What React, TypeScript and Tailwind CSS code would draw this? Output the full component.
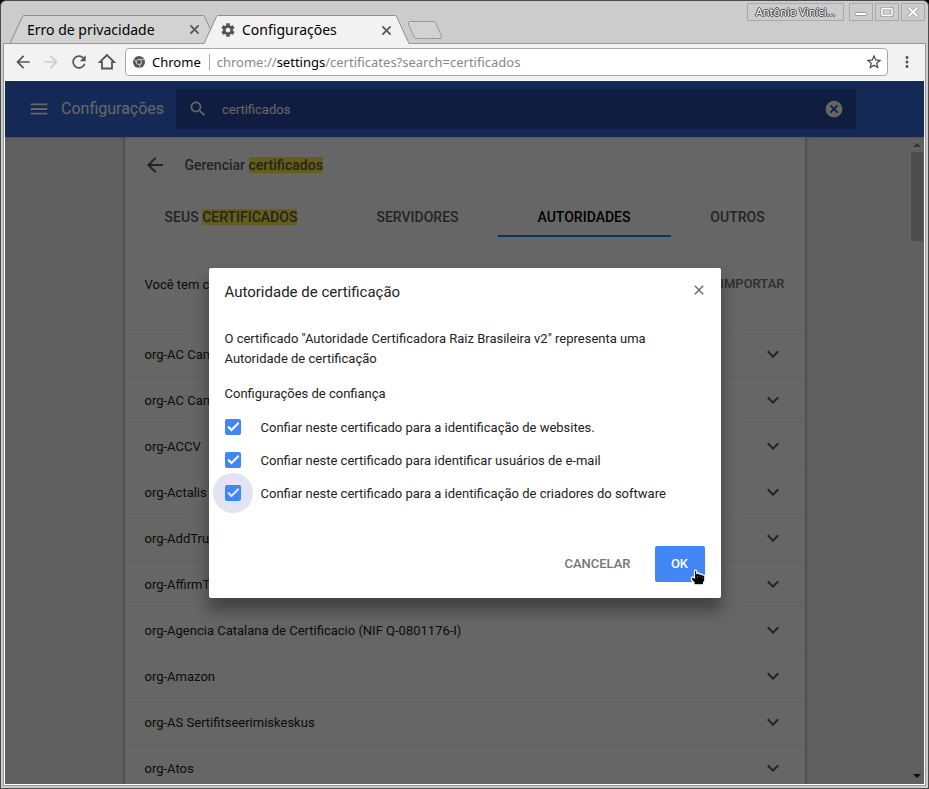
import { useId, useState, type ReactNode } from "react";

const authorities = [
  "org-AC Camerfirma",
  "org-AC Camerfirma",
  "org-ACCV",
  "org-Actalis",
  "org-AddTrust",
  "org-AffirmTrust",
  "org-Agencia Catalana de Certificacio (NIF Q-0801176-I)",
  "org-Amazon",
  "org-AS Sertifitseerimiskeskus",
  "org-Atos",
];

function Icon({ d, className }: { d: string; className: string }) {
  return (
    <svg viewBox="0 0 24 24" fill="currentColor" aria-hidden="true" className={className}>
      <path d={d} />
    </svg>
  );
}

const paths = {
  back: "M20 11H7.83l5.59-5.59L12 4l-8 8 8 8 1.41-1.41L7.83 13H20v-2z",
  forward: "M12 4l-1.41 1.41L16.17 11H4v2h12.17l-5.58 5.59L12 20l8-8z",
  reload:
    "M17.65 6.35C16.2 4.9 14.21 4 12 4c-4.42 0-7.99 3.58-7.99 8s3.57 8 7.99 8c3.73 0 6.84-2.55 7.73-6h-2.08c-.82 2.33-3.04 4-5.65 4-3.31 0-6-2.69-6-6s2.69-6 6-6c1.66 0 3.14.69 4.22 1.78L13 11h7V4l-2.35 2.35z",
  close:
    "M19 6.41L17.59 5 12 10.59 6.41 5 5 6.41 10.59 12 5 17.59 6.41 19 12 13.41 17.59 19 19 17.59 13.41 12z",
  menu: "M3 18h18v-2H3v2zm0-5h18v-2H3v2zm0-7v2h18V6H3z",
  search:
    "M15.5 14h-.79l-.28-.27C15.41 12.59 16 11.11 16 9.5 16 5.91 13.09 3 9.5 3S3 5.91 3 9.5 5.91 16 9.5 16c1.61 0 3.09-.59 4.23-1.57l.27.28v.79l5 4.99L20.49 19l-4.99-5zm-6 0C7.01 14 5 11.99 5 9.5S7.01 5 9.5 5 14 7.01 14 9.5 11.99 14 9.5 14z",
  cancel:
    "M12 2C6.47 2 2 6.47 2 12s4.47 10 10 10 10-4.47 10-10S17.53 2 12 2zm5 13.59L15.59 17 12 13.41 8.41 17 7 15.59 10.59 12 7 8.41 8.41 7 12 10.59 15.59 7 17 8.41 13.41 12 17 15.59z",
  gear: "M19.43 12.98c.04-.32.07-.64.07-.98s-.03-.66-.07-.98l2.11-1.65c.19-.15.24-.42.12-.64l-2-3.46c-.12-.22-.39-.3-.61-.22l-2.49 1c-.52-.4-1.08-.73-1.69-.98l-.38-2.65C14.46 2.18 14.25 2 14 2h-4c-.25 0-.46.18-.49.42l-.38 2.65c-.61.25-1.17.59-1.69.98l-2.49-1c-.23-.09-.49 0-.61.22l-2 3.46c-.13.22-.07.49.12.64l2.11 1.65c-.04.32-.07.65-.07.98s.03.66.07.98l-2.11 1.65c-.19.15-.24.42-.12.64l2 3.46c.12.22.39.3.61.22l2.49-1c.52.4 1.08.73 1.69.98l.38 2.65c.03.24.24.42.49.42h4c.25 0 .46-.18.49-.42l.38-2.65c.61-.25 1.17-.59 1.69-.98l2.49 1c.23.09.49 0 .61-.22l2-3.46c.12-.22.07-.49-.12-.64l-2.11-1.65zM12 15.5c-1.93 0-3.5-1.57-3.5-3.5s1.57-3.5 3.5-3.5 3.5 1.57 3.5 3.5-1.57 3.5-3.5 3.5z",
  star: "M22 9.24l-7.19-.62L12 2 9.19 8.63 2 9.24l5.46 4.73L5.82 21 12 17.27 18.18 21l-1.63-7.03L22 9.24zM12 15.4l-3.76 2.27 1-4.28-3.32-2.88 4.38-.38L12 6.1l1.71 4.04 4.38.38-3.32 2.88 1 4.28L12 15.4z",
  more: "M12 8c1.1 0 2-.9 2-2s-.9-2-2-2-2 .9-2 2 .9 2 2 2zm0 2c-1.1 0-2 .9-2 2s.9 2 2 2 2-.9 2-2-.9-2-2-2zm0 6c-1.1 0-2 .9-2 2s.9 2 2 2 2-.9 2-2-.9-2-2-2z",
  expand: "M16.59 8.59L12 13.17 7.41 8.59 6 10l6 6 6-6z",
};

function BrowserTab({ title, icon, active }: { title: string; icon?: ReactNode; active?: boolean }) {
  const fill = active ? "#f2f2f2" : "#d2d2d2";
  return (
    <div className="-mr-[13px] flex h-[29px]">
      <svg viewBox="0 0 14 29" className="h-[29px] w-[14px] shrink-0" aria-hidden="true">
        <path d={active ? "M0 29L13 .5H14V29z" : "M1 28L13 .5H14V28z"} fill={fill} />
        <path d="M0 28.5L12.5 1.5Q13 .5 14 .5" fill="none" stroke="#8e8e8e" />
      </svg>
      <div
        className={
          active
            ? "flex w-[177px] items-center border-t border-[#8e8e8e] bg-[#f2f2f2]"
            : "flex w-[179px] items-center border-t border-b border-t-[#8e8e8e] border-b-[#999] bg-[#d2d2d2]"
        }
      >
        {icon}
        <button className={active ? "ml-1.5 flex-1 text-left" : "ml-[3px] flex-1 text-left"}>{title}</button>
        <button aria-label="Fechar guia" className={active ? "mr-px" : "mr-px"}>
          <Icon d={paths.close} className="size-[15px] stroke-current stroke-1 text-[#555]" />
        </button>
      </div>
      <svg viewBox="0 0 14 29" className="h-[29px] w-[14px] shrink-0" aria-hidden="true">
        <path d={active ? "M14 29L1 .5H0V29z" : "M13 28L1 .5H0V28z"} fill={fill} />
        <path d="M14 28.5L1.5 1.5Q1 .5 0 .5" fill="none" stroke="#8e8e8e" />
      </svg>
    </div>
  );
}

function Trust({ label, focused }: { label: string; focused?: boolean }) {
  const id = useId();
  const [on, setOn] = useState(true);
  return (
    <div className="flex h-[33px] items-center gap-5">
      <span className="relative flex size-4">
        {focused && <span className="absolute -inset-3 rounded-full bg-[#e2e4f3]" />}
        <input
          id={id}
          type="checkbox"
          checked={on}
          onChange={() => setOn(!on)}
          className="peer relative size-4 appearance-none rounded-xs border-2 border-[#5a5a5a] checked:border-0 checked:bg-[#4285f4]"
        />
        <svg viewBox="0 0 16 16" aria-hidden="true" className="pointer-events-none absolute inset-0 hidden peer-checked:block">
          <path d="M3 7.500L6.500 11L13.700 3.800" fill="none" stroke={focused ? "#e2e8fa" : "#fff"} strokeWidth="2" />
        </svg>
      </span>
      <label htmlFor={id} className="pt-0.5">{label}</label>
    </div>
  );
}

function ChromeLogo() {
  return (
    <svg viewBox="0 0 12 12" className="size-3" aria-hidden="true">
      <circle cx="6" cy="6" r="6" fill="#555" />
      <circle cx="6" cy="6" r="2.6" fill="none" stroke="#ddd" strokeWidth=".8" />
      <path d="M6 3.400H11.400M3.700 7.200L1.200 2.800M8.300 7.200L5.800 12" stroke="#ddd" strokeWidth=".8" />
    </svg>
  );
}

function HandCursor() {
  return (
    <svg viewBox="0 0 16 17" className="absolute -right-px -bottom-1 h-[17px] w-4" aria-hidden="true">
      <path
        d="M4.500 2Q5.500 .2 6.800 2V4.500L8.500 4L9.500 5L11.500 4.800L12.500 6L14.800 6.500V12L13.500 13.500V15.800H4V13.500L1.500 11V8.500L3 8L4.500 9z"
        fill="#000"
        stroke="#fff"
        strokeWidth="1.2"
      />
      <path d="M7.500 7V9M10 7.500V9M12.500 8V9.500" stroke="#777" strokeWidth=".7" />
    </svg>
  );
}

export default function App() {
  const mark = "bg-[#ffeb3b] text-inherit";
  return (
    <div className="h-screen bg-black">
      <div className="flex h-full flex-col overflow-hidden rounded-t-md border border-[#4b4b4b] bg-[#cccccc] px-0.5 pb-0.5 font-['Noto_Sans',sans-serif] text-[14px] leading-5 text-black">
        <header className="relative z-10 -mb-px flex h-[43px] shrink-0 items-end">
          <div className="flex flex-1 items-end pl-[7px]">
            <BrowserTab title="Erro de privacidade" />
            <div className="z-10 flex">
              <BrowserTab title="Configurações" active icon={<Icon d={paths.gear} className="ml-0.5 size-4 text-[#555]" />} />
            </div>
            <button aria-label="Nova guia" className="mb-1 ml-[11px] pb-px">
              <svg viewBox="0 0 36 18" className="h-[18px] w-9" aria-hidden="true">
                <path d="M2.500 .5H26Q28 .5 29 2.500L34.500 15Q35 17.500 33 17.500H10Q8 17.500 7 15.500L1.500 3Q1 .5 2.500 .5z" fill="#d2d2d2" stroke="#999" />
              </svg>
            </button>
          </div>
          <div className="flex items-start gap-0.5 self-start pt-0.5 pr-px">
            <button className="mr-[3px] h-[18px] w-[97px] border border-[#aaa] text-[11px] leading-4 text-white [text-shadow:1px_0_#444,-1px_0_#444,0_1px_#444,0_-1px_#444]">
              Antônio Viníci...
            </button>
            <button aria-label="Minimizar" className="grid h-[18px] w-6 place-items-center border border-[#aaa]">
              <svg viewBox="0 0 14 10" className="h-2.5 w-3.5"><rect x="1.500" y="5.500" width="11" height="3" rx="1" fill="#fff" stroke="#999" /></svg>
            </button>
            <button aria-label="Maximizar" className="grid h-[18px] w-6 place-items-center border border-[#aaa]">
              <svg viewBox="0 0 14 10" className="h-2.5 w-3.5">
                <rect x="2" y="1" width="10" height="8" rx="1" fill="none" stroke="#999" strokeWidth="3" />
                <rect x="2" y="1.500" width="10" height="7" rx="1" fill="none" stroke="#fff" strokeWidth="1.500" />
              </svg>
            </button>
            <button aria-label="Fechar" className="grid h-[18px] w-6 place-items-center border border-[#aaa]">
              <svg viewBox="0 0 14 12" className="h-3 w-3.5" fill="none" strokeLinecap="round">
                <path d="M3 2L11 10M11 2L3 10" stroke="#999" strokeWidth="3.500" />
                <path d="M3 2L11 10M11 2L3 10" stroke="#fff" strokeWidth="2" />
              </svg>
            </button>
          </div>
        </header>

        <div className="flex min-h-0 flex-1 flex-col border border-[#999] bg-[#f2f2f2]">
          <nav className="flex h-9 shrink-0 items-center gap-1 pr-1.5 pl-[7px] text-[#555]">
            <button aria-label="Voltar" className="grid w-6 place-items-center"><Icon d={paths.back} className="size-5" /></button>
            <button aria-label="Avançar" className="grid w-6 place-items-center text-[#ccc]"><Icon d={paths.forward} className="size-5" /></button>
            <button aria-label="Recarregar" className="grid w-6 place-items-center"><Icon d={paths.reload} className="size-5" /></button>
            <button aria-label="Página inicial" className="grid w-6 place-items-center">
              <svg viewBox="0 0 20 20" className="size-5" aria-hidden="true">
                <path d="M10 3L2.800 10.200H5V16.500H15V10.200H17.200z" fill="none" stroke="currentColor" strokeWidth="1.800" />
              </svg>
            </button>
            <div className="ml-0.5 flex h-7 flex-1 items-center rounded-sm border border-[#a9a9a9] bg-white pr-1 pl-[7px]">
              <ChromeLogo />
              <span className="ml-[7px] text-[13px] text-black">Chrome</span>
              <span className="mr-[7px] ml-2 h-4 w-px bg-[#aaa]" />
              <span className="flex-1 text-[13px] text-[#888]">
                chrome://<span className="text-black">settings</span>/certificates?search=certificados
              </span>
              <button aria-label="Favoritar"><Icon d={paths.star} className="size-[18px] text-[#444]" /></button>
            </div>
            <button aria-label="Menu" className="ml-[3px] grid w-6 place-items-center"><Icon d={paths.more} className="size-[18px]" /></button>
          </nav>

          <div className="relative flex min-h-0 flex-1 flex-col border border-white bg-[#f1f1f1] font-['Roboto',sans-serif] text-[13px] leading-5">
            <div className="z-10 flex h-14 shrink-0 items-center bg-[#3367d6] pl-[23px] text-white shadow-sm">
              <button aria-label="Menu principal"><Icon d={paths.menu} className="size-[22px]" /></button>
              <h1 className="ml-[11px] w-[115px] text-[16px]">Configurações</h1>
              <div className="flex h-10 max-w-[680px] flex-1 items-center bg-black/25 px-3">
                <Icon d={paths.search} className="size-5" />
                <input aria-label="Pesquisar nas configurações" defaultValue="certificados" className="ml-3.5 min-w-0 flex-1 pt-0.5 outline-none" />
                <button aria-label="Limpar pesquisa"><Icon d={paths.cancel} className="size-5" /></button>
              </div>
            </div>

            <div className="flex min-h-0 flex-1">
              <main className="min-w-0 flex-1 overflow-hidden pl-[14px]">
                <section className="mx-auto h-full max-w-[680px] bg-white text-[#212121] shadow-[0_0_3px_1px_rgba(0,0,0,0.3)]">
                  <div className="flex h-14 items-center pl-[18px]">
                    <button aria-label="Voltar"><Icon d={paths.back} className="size-6 text-[#5a5a5a]" /></button>
                    <h2 className="ml-[18px] text-[14px] font-medium text-[#5a5a5a]">
                      Gerenciar <mark className={mark}>certificados</mark>
                    </h2>
                  </div>
                  <div role="tablist" className="flex h-11 text-[14px] font-medium text-[#5a5a5a]">
                    <button role="tab" className="flex-[213_1_0] pt-1 uppercase">Seus <mark className={mark}>certificados</mark></button>
                    <button role="tab" className="flex-[160_1_0] pt-1 uppercase">Servidores</button>
                    <button role="tab" aria-selected="true" className="flex-[173_1_0] border-y-2 border-t-transparent border-b-[#0a8cee] pt-1 text-black uppercase">Autoridades</button>
                    <button role="tab" className="flex-[134_1_0] pt-1 uppercase">Outros</button>
                  </div>
                  <div className="flex h-[93px] items-center justify-between px-5">
                    <p className="pt-0.5">Você tem certificados</p>
                    <button className="font-medium text-[#757575] uppercase">Importar</button>
                  </div>
                  <ul>
                    {authorities.map((name, i) => (
                      <li key={i} className="flex h-[46px] items-center justify-between border-t border-[#efefef] px-5">
                        <span className="pt-0.5">{name}</span>
                        <button aria-label={`Expandir ${name}`}><Icon d={paths.expand} className="size-6 text-[#5a5a5a]" /></button>
                      </li>
                    ))}
                  </ul>
                </section>
              </main>
              <div className="flex w-[14px] shrink-0 flex-col items-center justify-between py-1">
                <div className="flex w-full flex-col items-center">
                  <svg viewBox="0 0 8 4" className="mt-0.5 h-1 w-2" aria-hidden="true"><path d="M0 4L4 0L8 4z" fill="#888" /></svg>
                  <span className="mt-[5px] h-[89px] w-3 bg-[#c1c1c1]" />
                </div>
                <svg viewBox="0 0 8 4" className="mb-0.5 h-1 w-2" aria-hidden="true"><path d="M0 0L4 4L8 0z" fill="#222" /></svg>
              </div>
            </div>

            <div className="absolute inset-0 z-20 flex items-center justify-center bg-black/60 pt-px">
              <div role="dialog" aria-modal="true" aria-labelledby="dialog-title" className="flex w-[512px] flex-col rounded-xs bg-white p-4 text-[#222] shadow-[0_12px_16px_1px_rgba(0,0,0,0.35)]">
                <div className="flex h-4 items-center justify-between">
                  <h2 id="dialog-title" className="text-[15px]">Autoridade de certificação</h2>
                  <button aria-label="Fechar" className="-mt-1 -mr-0.5"><Icon d={paths.close} className="size-4 text-[#666]" /></button>
                </div>
                <p className="mt-[29px]">
                  O certificado "Autoridade Certificadora Raiz Brasileira v2" representa uma Autoridade de certificação
                </p>
                <h3 className="mt-[15px] mb-1.5">Configurações de confiança</h3>
                <Trust label="Confiar neste certificado para a identificação de websites." />
                <Trust label="Confiar neste certificado para identificar usuários de e-mail" />
                <Trust label="Confiar neste certificado para a identificação de criadores do software" focused />
                <div className="mt-[37px] flex justify-end gap-2 font-medium">
                  <button className="h-9 px-4 text-[#757575] uppercase">Cancelar</button>
                  <button className="relative h-9 w-[50px] rounded-xs bg-[#4285f4] text-white">
                    OK
                    <HandCursor />
                  </button>
                </div>
              </div>
            </div>
          </div>
        </div>
      </div>
    </div>
  );
}
